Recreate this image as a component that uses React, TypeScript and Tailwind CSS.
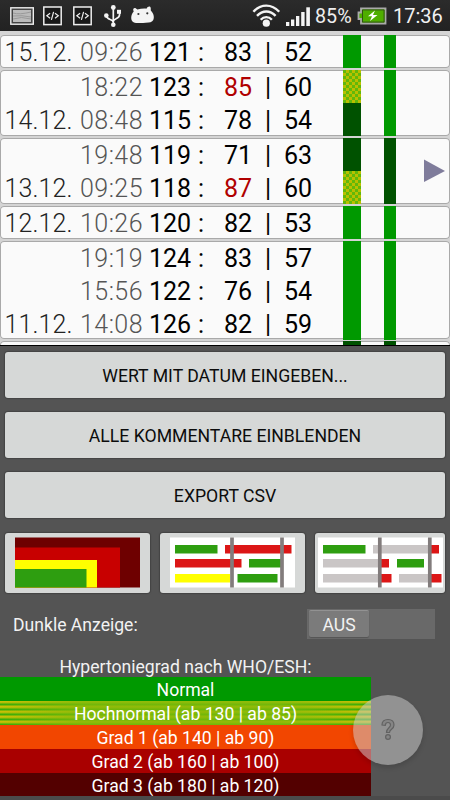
import React from "react";

type Tone = "normal" | "dark" | "high";
type Reading = {
  date?: string;
  time: string;
  sys: string;
  dia: string;
  pulse: string;
  alert?: boolean;
  wide: Tone;
  slim: Tone;
};

const groups: Reading[][] = [
  [{ date: "15.12.", time: "09:26", sys: "121", dia: "83", pulse: "52", wide: "normal", slim: "normal" }],
  [
    { time: "18:22", sys: "123", dia: "85", pulse: "60", alert: true, wide: "high", slim: "normal" },
    { date: "14.12.", time: "08:48", sys: "115", dia: "78", pulse: "54", wide: "dark", slim: "normal" },
  ],
  [
    { time: "19:48", sys: "119", dia: "71", pulse: "63", wide: "dark", slim: "dark" },
    { date: "13.12.", time: "09:25", sys: "118", dia: "87", pulse: "60", alert: true, wide: "high", slim: "dark" },
  ],
  [{ date: "12.12.", time: "10:26", sys: "120", dia: "82", pulse: "53", wide: "normal", slim: "normal" }],
  [
    { time: "19:19", sys: "124", dia: "83", pulse: "57", wide: "normal", slim: "normal" },
    { time: "15:56", sys: "122", dia: "76", pulse: "54", wide: "normal", slim: "normal" },
    { date: "11.12.", time: "14:08", sys: "126", dia: "82", pulse: "59", wide: "normal", slim: "normal" },
  ],
];

const toneClass: Record<Tone, string> = {
  normal: "bg-[#009900]",
  dark: "bg-[#005200]",
  high: "bg-[repeating-conic-gradient(#b9c000_0%_25%,#62b80a_0%_50%)] bg-[length:6px_6px]",
};

function Row({ r }: { r: Reading }) {
  return (
    <div className="flex h-[33px] items-stretch whitespace-pre text-[25px] leading-[35px] text-black">
      <span className="w-[72px] pl-[4.6px] font-light tracking-[0.1px] text-[#222]">{r.date}</span>
      <span className="w-[71px] text-right font-light tracking-[0.45px] text-[#555]">{r.time}</span>
      <span className="w-[55px] pl-[6px]">{r.sys}</span>
      <span className="w-[26px]">:</span>
      <span className={r.alert ? "w-[41px] text-[#b00000]" : "w-[41px]"}>{r.dia}</span>
      <span className="w-[19px]">|</span>
      <span className="w-[59px]">{r.pulse}</span>
      <span className={`w-[18px] ${toneClass[r.wide]}`} />
      <span className={`ml-[23px] w-[12px] ${toneClass[r.slim]}`} />
    </div>
  );
}

const cardClass = "shrink-0 rounded-[4px] bg-[#fafafa] shadow-[inset_0_0_0_1px_#a9a9a9]";

function StatusBar() {
  return (
    <header className="flex h-[31px] shrink-0 items-center bg-linear-to-b from-[#2b2b2b] to-[#222]">
      <svg width="225" height="31" viewBox="0 0 225 31">
        <rect x="10.8" y="7.8" width="22.5" height="16.4" fill="#444" stroke="#eee" strokeWidth="1.4" />
        <rect x="13" y="10" width="18" height="12" fill="#bbb" />
        <path d="M13 13q6 2 18-1M13 16q9-1 18 1M13 19q8-3 18 0" stroke="#999" fill="none" />
        {[43.8, 73.8].map((x) => (
          <g key={x} fill="none" stroke="#eee">
            <rect x={x} y="7" width="17.4" height="17.6" strokeWidth="1.5" fill="#191919" />
            <path
              d={`M${x + 6.3} 13.3l-3.3 2.5 3.3 2.5M${x + 11.2} 13.3l3.3 2.5-3.3 2.5M${x + 9.8} 11.8l-2.2 8`}
              strokeWidth="1.2"
            />
          </g>
        ))}
        <g stroke="#f4f4f4" fill="none" strokeWidth="1.7">
          <path d="M113.3 8v18M106.5 15.5c0 5 6.8 3 6.8 7M119.5 12v3c0 4-6.2 3.5-6.2 6.5" />
        </g>
        <g fill="#f4f4f4">
          <circle cx="113.3" cy="7.5" r="2.4" />
          <circle cx="106.3" cy="15.6" r="2.3" />
          <rect x="117" y="9.8" width="4" height="4" />
          <circle cx="113.3" cy="24.8" r="2.3" />
          <path d="M133.600 8.600c.8-1.100 2.300-.6 3.800 1 3-.9 6.500-1.200 9-.9 1-1.800 2.600-2.600 3.700-1.900 1 .8.600 2.400.7 3.600 2.100 2 3.300 4.800 3 7.500-.3 3-2.300 4.300-5.300 4.500-4.500.2-8 .8-12.500.6-3-.2-4.800-2-4.800-5 0-2.800 1.100-5 2.500-6.600-.5-1-.8-2-.1-2.800z" />
        </g>
        <circle cx="138.400" cy="14" r="1.100" fill="#333" />
        <circle cx="147.300" cy="13.300" r="1.100" fill="#333" />
      </svg>
      <svg width="88" height="31" viewBox="225 0 88 31">
        <g fill="none" stroke="#f4f4f4" strokeWidth="2.400">
          <path d="M253.400 11.800c7.500-8.200 18.300-8.200 25.800 0M257 15.900c5.500-5.900 13.100-5.900 18.600 0M260.700 19.700c3.200-3.500 8-3.500 11.200 0" />
        </g>
        <circle cx="266.300" cy="23.200" r="3.600" fill="#f4f4f4" />
        <g fill="#f4f4f4">
          <rect x="286" y="22" width="3.300" height="4" />
          <rect x="291" y="19.500" width="3.300" height="6.500" />
          <rect x="296" y="16" width="3.300" height="10" />
          <rect x="301.200" y="12" width="3.400" height="14" />
          <rect x="306.300" y="7.300" width="3.600" height="18.700" />
        </g>
      </svg>
      <span className="w-[44px] pt-[2px] pl-[2px] text-[19.700px] text-[#eee]">85%</span>
      <svg width="36" height="31" viewBox="357 0 36 31">
        <path d="M361 8.500h24.500v15H361v-4.500h-2.500v-6.500h2.500z" fill="#4fae00" stroke="#aaa" strokeWidth="1.800" />
        <path d="M362.500 9.900h21.600v12.200h-21.600z" fill="none" stroke="#2c4a14" strokeWidth="0.900" />
        <path d="M375 10.500l-7 5.800h4l-2 4.700 7.500-6h-4.500z" fill="#fff" />
      </svg>
      <span className="pt-[1px] text-[20px] text-[#f2f2f2]">17:36</span>
    </header>
  );
}

function ActionButton({ label }: { label: string }) {
  return (
    <button className="h-[46px] w-full rounded-[3px] bg-[#d6d8d7] pt-[2px] text-[17.650px] text-[#0c0c0c] shadow-[0_0_1px_1px_#444]">
      {label}
    </button>
  );
}

function Block({ x, y, w, c }: { x: number; y: number; w: number; c: string }) {
  return <rect x={x} y={y} width={w} height="8.500" fill={c} />;
}

const green = "#2e9e10";
const red = "#dc1616";
const pale = "#cac6c6";
const thumbClass = "h-[60px] rounded-[3px] bg-[#d6d8d7] shadow-[0_0_1px_1px_#444]";

function Thumbs() {
  return (
    <div className="mt-[15px] flex gap-[10px]">
      <button className={`${thumbClass} w-[145px]`}>
        <svg width="145" height="60" viewBox="5 533 145 60">
          <rect x="15" y="537.500" width="125" height="50" fill="#6e0000" />
          <rect x="15" y="547.500" width="105" height="40" fill="#c80000" />
          <rect x="15" y="560" width="82" height="27.500" fill="#ff0" />
          <rect x="15" y="569" width="71.500" height="18.500" fill={green} />
        </svg>
      </button>
      <button className={`${thumbClass} w-[145px]`}>
        <svg width="145" height="60" viewBox="160 533 145 60">
          <rect x="170" y="537.500" width="125" height="50" fill="#fff" />
          <Block x={175} y={545} w={42.5} c={green} />
          <Block x={225} y={545} w={66.5} c={red} />
          <Block x={175} y={559} w={66.5} c={red} />
          <Block x={249} y={559} w={32} c={green} />
          <Block x={175} y={574} w={55} c="#ff0" />
          <Block x={237.5} y={574} w={40} c={green} />
          <path d="M232 537.500v50M282 537.500v50" stroke="#827c7c" strokeWidth="3.700" />
        </svg>
      </button>
      <button className={`${thumbClass} w-[130px]`}>
        <svg width="130" height="60" viewBox="315 533 130 60">
          <rect x="318" y="537.500" width="125" height="50" fill="#fff" />
          <Block x={323} y={545} w={42.5} c={green} />
          <Block x={373} y={545} w={57} c={pale} />
          <Block x={431} y={545} w={8} c={red} />
          <Block x={323} y={559} w={55} c={pale} />
          <Block x={381} y={559} w={8} c={red} />
          <Block x={397} y={559} w={27} c={green} />
          <Block x={323} y={574} w={55} c={pale} />
          <Block x={381} y={574} w={10.5} c={red} />
          <Block x={399} y={574} w={31} c={pale} />
          <Block x={431} y={574} w={10.5} c={red} />
          <path d="M379.800 537.500v50M429.800 537.500v50" stroke="#827c7c" strokeWidth="3.700" />
        </svg>
      </button>
    </div>
  );
}

const grades = [
  { label: "Normal", bg: "h-6 bg-[#009900]" },
  {
    label: "Hochnormal (ab 130 | ab 85)",
    bg: "h-6 bg-[linear-gradient(90deg,transparent_0%,#82ba0acc_22%,#82ba0acc_75%,transparent_100%),repeating-linear-gradient(180deg,#d5c005_0px,#a9bd05_2px,#39ad08_3px,#39ad08_4px,#c9c005_5px)]",
  },
  { label: "Grad 1 (ab 140 | ab 90)", bg: "h-6 bg-[#f24600]" },
  { label: "Grad 2 (ab 160 | ab 100)", bg: "h-6 bg-[#a90000]" },
  { label: "Grad 3 (ab 180 | ab 120)", bg: "h-[23px] bg-[#530000]" },
];

export default function App() {
  return (
    <div className="relative flex h-[800px] w-[450px] flex-col overflow-hidden bg-[#545454] font-['Roboto',sans-serif]">
      <StatusBar />
      <main className="relative flex h-[315px] shrink-0 flex-col gap-[2px] overflow-hidden border-b border-black bg-[#d4d4d4] pt-[4px]">
        {groups.map((g, i) => (
          <section key={i} className={g.length === 3 ? `${cardClass} h-[98px]` : cardClass}>
            {g.map((r) => (
              <Row key={r.time} r={r} />
            ))}
          </section>
        ))}
        <section className={`${cardClass} flex h-[20px] pl-[343px]`}>
          <span className="w-[18px] bg-[#005200]" />
          <span className="ml-[23px] w-[12px] bg-[#005200]" />
        </section>
        <svg className="absolute top-[128px] left-[423px]" width="23" height="24" viewBox="0 0 23 24">
          <path d="M1 0.500L22 12 1 23z" fill="#7f7c9b" />
        </svg>
      </main>
      <div className="flex flex-col px-[5px] pt-[6px]">
        <div className="flex flex-col gap-[14px]">
          <ActionButton label="WERT MIT DATUM EINGEBEN..." />
          <ActionButton label="ALLE KOMMENTARE EINBLENDEN" />
          <ActionButton label="EXPORT CSV" />
        </div>
        <Thumbs />
      </div>
      <div className="mt-[16px] flex h-[30px] items-center justify-between pr-[15px] pl-[13px] text-[17.600px] text-[#f2f2f2]">
        <span className="pt-[2px]">Dunkle Anzeige:</span>
        <div className="flex h-[30px] w-[128px] bg-[#696969] p-[2px] pt-[1px]">
          <span className="h-[27px] w-[60px] rounded-[2px] border-t border-[#929292] bg-[#7b7b7b] text-center leading-[28px] shadow-[0_1px_1px_#555]">
            AUS
          </span>
        </div>
      </div>
      <section className="mt-[15px] w-[371px] text-center text-[17.600px] leading-[26px] text-white">
        <h2 className="h-[23px] leading-[26px] text-[#f2f2f2]">Hypertoniegrad nach WHO/ESH:</h2>
        {grades.map((g) => (
          <div key={g.label} className={g.bg}>
            {g.label}
          </div>
        ))}
      </section>
      <div className="h-[6px] shrink-0 bg-[#4b4b4b]" />
      <button className="absolute top-[695px] left-[353px] flex size-[70px] items-center justify-center rounded-full bg-[rgba(203,203,203,0.52)] shadow-[0_3px_5px_rgba(0,0,0,0.14)]">
        <svg width="16" height="24" viewBox="0 0 16 24" fill="#858585" stroke="#626262" strokeWidth="1.200">
          <path d="M2 7C2 3.500 4.500 1.500 8 1.500s6 2 6 5.500c0 4.500-4.500 4-4.500 7.500h-3c0-5 4-4.500 4-7.500 0-1.500-1-2.500-2.500-2.500S5.500 5.500 5.300 7.300z" />
          <circle cx="8" cy="19" r="2.400" />
        </svg>
      </button>
    </div>
  );
}
